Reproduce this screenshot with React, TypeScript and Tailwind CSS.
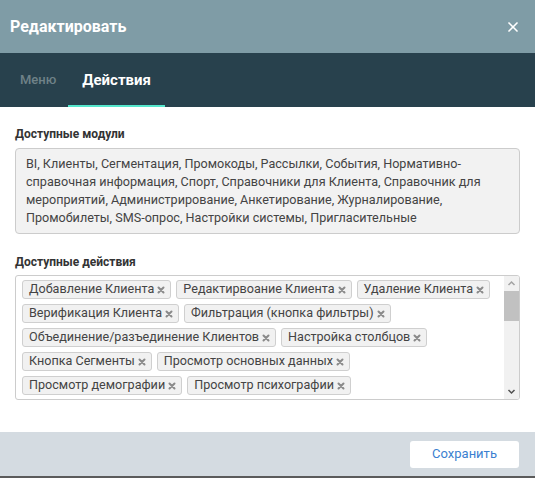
import { X } from "lucide-react";

// Модули, доступные роли
const modules =
  "BI, Клиенты, Сегментация, Промокоды, Рассылки, События, Нормативно-справочная информация, Спорт, Справочники для Клиента, Справочник для мероприятий, Администрирование, Анкетирование, Журналирование, Промобилеты, SMS-опрос, Настройки системы, Пригласительные";

// Действия разбиты по строкам так же, как в выпадающем списке
const actionRows = [
  ["Добавление Клиента", "Редактирвоание Клиента", "Удаление Клиента"],
  ["Верификация Клиента", "Фильтрация (кнопка фильтры)"],
  ["Объединение/разъединение Клиентов", "Настройка столбцов"],
  ["Кнопка Сегменты", "Просмотр основных данных"],
  ["Просмотр демографии", "Просмотр психографии"],
];

function Tag({ label }: { label: string }) {
  return (
    <span className="flex h-[19px] shrink-0 items-center gap-[3px] whitespace-nowrap rounded-[3px] border border-[#cfcfcf] bg-[#f1f1f1] pl-[6px] pr-[5px] text-[12.6px] leading-none text-[#444]">
      {label}
      <svg width="8" height="8" viewBox="0 0 8 8" className="mt-[1px]">
        <path d="M1.5 1.5 L6.5 6.5 M6.5 1.5 L1.5 6.5" stroke="#8a8a8a" strokeWidth="2" strokeLinecap="round" />
      </svg>
    </span>
  );
}

function FakeScrollbar() {
  return (
    <div className="flex w-[15px] shrink-0 flex-col items-center bg-[#f1f1f1]">
      <svg width="15" height="15" viewBox="0 0 15 15">
        <path d="M4.5 9 L7.5 6 L10.5 9" stroke="#a3a3a3" strokeWidth="1.5" fill="none" />
      </svg>
      <div className="h-[30px] w-full bg-[#c1c1c1]" />
      <div className="flex-1" />
      <svg width="15" height="15" viewBox="0 0 15 15">
        <path d="M4.5 6 L7.5 9 L10.5 6" stroke="#505050" strokeWidth="1.5" fill="none" />
      </svg>
    </div>
  );
}

export default function App() {
  return (
    <div className="flex h-[478px] w-[535px] flex-col bg-white font-['Roboto',sans-serif]">
      {/* Шапка */}
      <div className="flex h-[53px] shrink-0 items-center justify-between bg-[#7f9ca6] pl-[10px] pr-[14px]">
        <h2 className="text-[16px] font-bold text-white">Редактировать</h2>
        <X className="h-[16px] w-[16px] text-white" strokeWidth={2.5} />
      </div>

      {/* Вкладки */}
      <div className="flex h-[54px] shrink-0 bg-[#28414d]">
        <div className="flex items-center pl-[20px] pr-[12px] text-[13px] font-medium text-[#6f8288]">Меню</div>
        <div className="relative flex items-center justify-center px-[14px] text-[15px] font-bold text-white">
          Действия
          <span className="absolute bottom-0 left-0 h-[2px] w-full bg-[#55e6cc]" />
        </div>
      </div>

      {/* Содержимое */}
      <div className="flex-1 px-[15px] pt-[20px]">
        <div className="mb-[7px] text-[12px] font-bold leading-[14px] text-[#333]">Доступные модули</div>
        <div className="rounded-[4px] border border-[#cccccc] bg-[#f2f2f2] px-[10px] py-[6px] text-[12.6px] leading-[18px] text-[#444]">
          {modules}
        </div>

        <div className="mb-[6px] mt-[21px] text-[12px] font-bold leading-[14px] text-[#333]">Доступные действия</div>
        <div className="flex h-[125px] overflow-hidden rounded-[3px] border border-[#cccccc]">
          <div className="flex flex-1 flex-col gap-[5px] pl-[6px] pt-[4px]">
            {actionRows.map((row, i) => (
              <div key={i} className="flex gap-[5px]">
                {row.map((a) => (
                  <Tag key={a} label={a} />
                ))}
              </div>
            ))}
          </div>
          <FakeScrollbar />
        </div>
      </div>

      {/* Подвал */}
      <div className="flex h-[44px] shrink-0 items-center justify-end bg-[#d4dbe1] pr-[16px]">
        <button className="h-[27px] w-[109px] rounded-[3px] bg-white text-[13px] text-[#3b7fd0]">Сохранить</button>
      </div>
      <div className="h-[2px] shrink-0 bg-[#5b5b5b]" />
    </div>
  );
}
